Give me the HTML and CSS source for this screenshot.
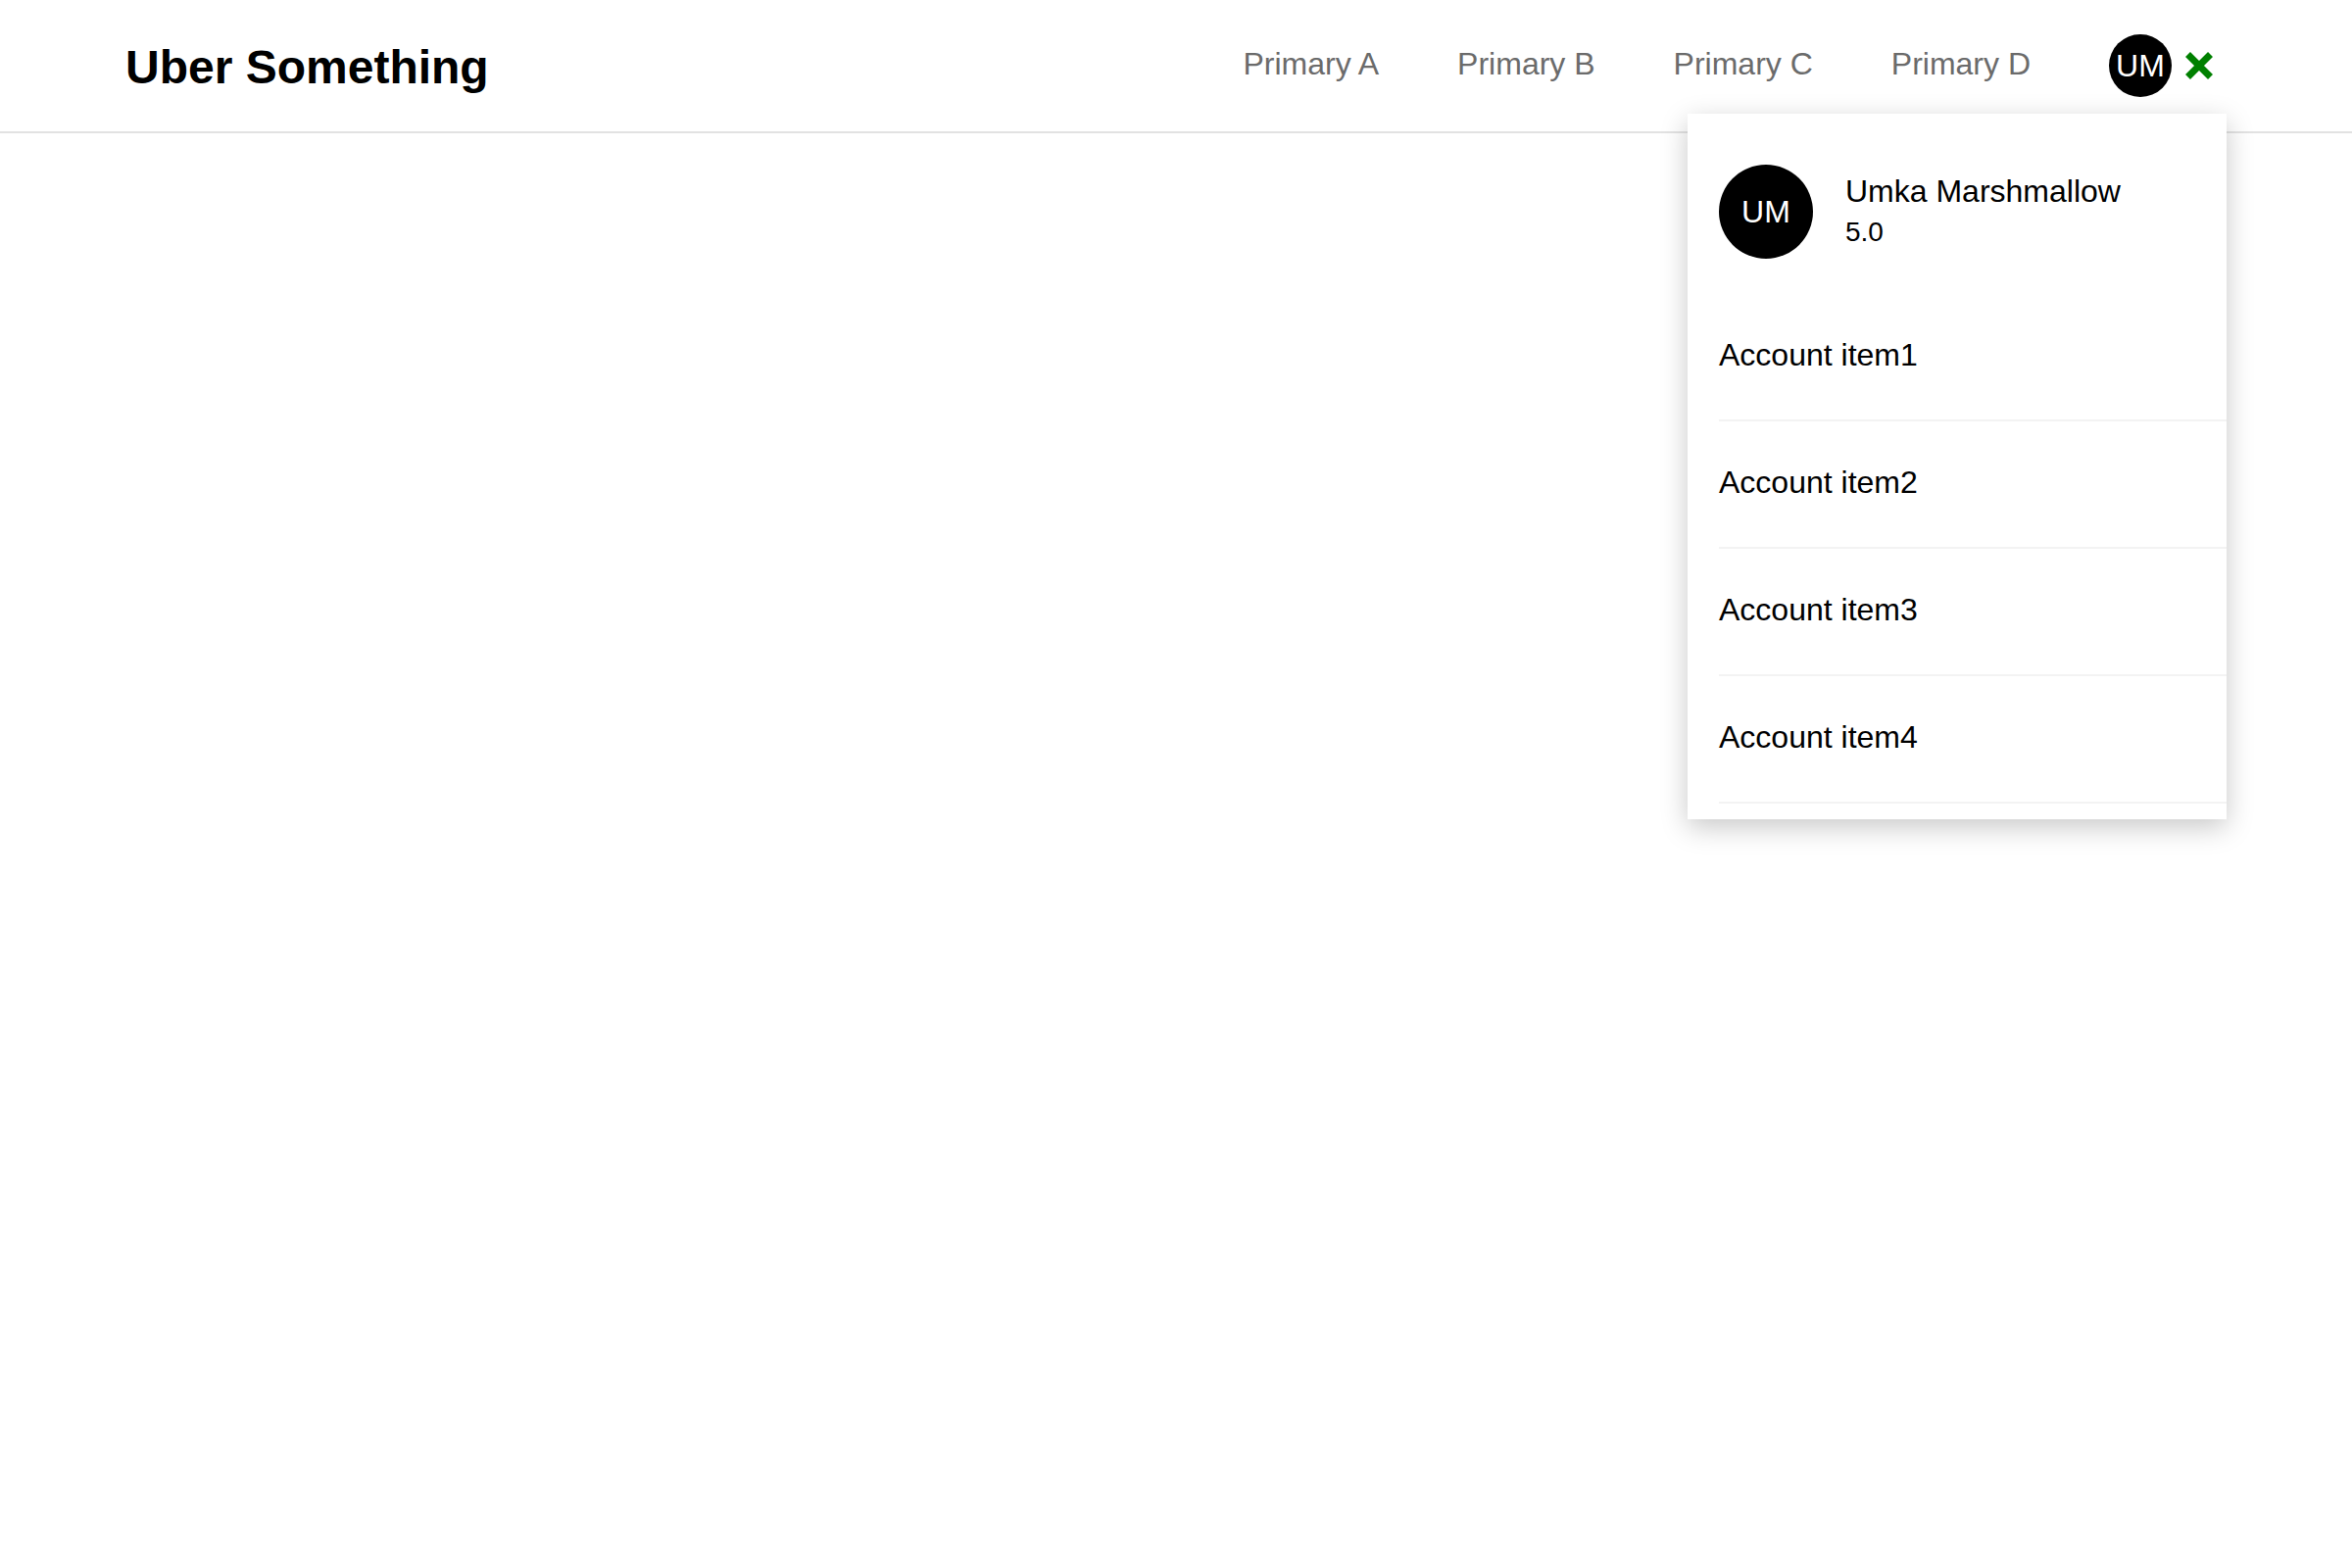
FILE: index.html
```html
<!DOCTYPE html>
<html lang="en">
<head>
<meta charset="utf-8">
<title>Uber Something</title>
<link rel="stylesheet" href="styles.css">
</head>
<body>
<div class="page">
  <header class="app-bar">
    <div class="logo">Uber Something</div>
    <nav class="main-nav">
      <a class="nav-item" href="#">Primary A</a>
      <a class="nav-item" href="#">Primary B</a>
      <a class="nav-item" href="#">Primary C</a>
      <a class="nav-item" href="#">Primary D</a>
    </nav>
    <div class="user-area">
      <div class="avatar avatar-small">UM</div>
      <button class="close-btn" aria-label="Close">
        <svg width="28" height="28" viewBox="0 0 28 28"><path d="M2.5 2.5 L25.5 25.5 M25.5 2.5 L2.5 25.5" stroke="#008000" stroke-width="7" fill="none"/></svg>
      </button>
    </div>
  </header>
  <div class="menu">
    <div class="menu-profile">
      <div class="avatar avatar-large">UM</div>
      <div class="profile-text">
        <div class="profile-name">Umka Marshmallow</div>
        <div class="profile-rating">5.0</div>
      </div>
    </div>
    <ul class="menu-list">
      <li class="menu-item">Account item1</li>
      <li class="menu-item">Account item2</li>
      <li class="menu-item">Account item3</li>
      <li class="menu-item">Account item4</li>
    </ul>
  </div>
</div>
</body>
</html>
```
FILE: styles.css
```css
html, body {
  margin: 0;
  padding: 0;
  background: #ffffff;
  font-family: "Liberation Sans", Arial, sans-serif;
  color: #000000;
}

.page {
  position: relative;
  min-height: 100vh;
}

.app-bar {
  display: flex;
  align-items: center;
  height: 134px;
  padding: 0 128px;
  border-bottom: 2px solid #e2e2e2;
}

.logo {
  font-size: 48px;
  font-weight: 700;
  padding-top: 3px;
}

.main-nav {
  margin-left: auto;
  display: flex;
  align-items: center;
  gap: 80px;
  margin-top: -3px;
}

.nav-item {
  font-size: 32px;
  color: #6b6b6b;
  text-decoration: none;
}

.user-area {
  display: flex;
  align-items: center;
  margin-left: 80px;
}

.avatar {
  display: flex;
  align-items: center;
  justify-content: center;
  border-radius: 50%;
  background: #000000;
  color: #ffffff;
  font-size: 32px;
  flex-shrink: 0;
}

.avatar-small {
  width: 64px;
  height: 64px;
}

.avatar-large {
  width: 96px;
  height: 96px;
}

.close-btn {
  width: 56px;
  height: 56px;
  padding: 0;
  border: 0;
  background: transparent;
  display: flex;
  align-items: center;
  justify-content: center;
}

.close-btn svg {
  display: block;
}

.menu {
  position: absolute;
  top: 116px;
  right: 128px;
  width: 518px;
  padding: 16px 0 16px 32px;
  background: #ffffff;
  box-shadow: 0 8px 26px rgba(0, 0, 0, 0.22);
  z-index: 10;
}

.menu-profile {
  display: flex;
  align-items: center;
  gap: 33px;
  padding: 36px 0;
}

.profile-name {
  font-size: 32px;
  line-height: 42px;
}

.profile-rating {
  font-size: 28px;
  line-height: 42px;
}

.menu-list {
  list-style: none;
  margin: 0;
  padding: 0;
}

.menu-item {
  box-sizing: border-box;
  height: 130px;
  padding-bottom: 3px;
  display: flex;
  align-items: center;
  font-size: 32px;
  border-bottom: 2px solid #f3f3f3;
}
```
